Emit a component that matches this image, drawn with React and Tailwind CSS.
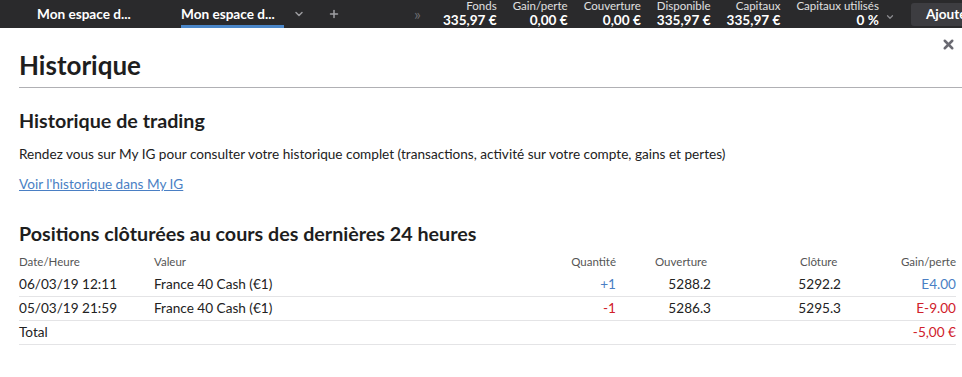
import React from "react";
import { FiChevronDown, FiPlus, FiX } from "react-icons/fi";

const stats = [
  { label: "Fonds", value: "335,97 €" },
  { label: "Gain/perte", value: "0,00 €" },
  { label: "Couverture", value: "0,00 €" },
  { label: "Disponible", value: "335,97 €" },
  { label: "Capitaux", value: "335,97 €" },
  { label: "Capitaux utilisés", value: "0 %" },
];

const positions = [
  {
    date: "06/03/19 12:11",
    market: "France 40 Cash (€1)",
    qty: "+1",
    open: "5288.2",
    close: "5292.2",
    pnl: "E4.00",
    positive: true,
  },
  {
    date: "05/03/19 21:59",
    market: "France 40 Cash (€1)",
    qty: "-1",
    open: "5286.3",
    close: "5295.3",
    pnl: "E-9.00",
    positive: false,
  },
];

const App = () => {
  return (
    <div className="h-[377px] w-[962px] overflow-hidden bg-white font-['Lato',sans-serif] text-[#222]">
      {/* top bar */}
      <div className="flex h-[28px] items-center overflow-hidden bg-[#2a2a2c] text-white">
        <div className="ml-[37px] w-[96px] shrink-0 text-[13.6px] font-bold whitespace-nowrap">Mon espace d...</div>
        <div className="relative ml-[48px] flex h-full w-[103px] shrink-0 items-center">
          <span className="text-[13.6px] font-bold whitespace-nowrap">Mon espace d...</span>
          <div className="absolute bottom-0 left-0 h-[3px] w-[103px] bg-[#4a86c8]" />
        </div>
        <FiChevronDown className="ml-[9px] h-[12px] w-[12px] shrink-0 stroke-[3] text-[#9a9a9e]" />
        <FiPlus className="ml-[23px] h-[12px] w-[12px] shrink-0 stroke-[3] text-[#a0a0a4]" />
        <span className="ml-[74px] shrink-0 text-[16px] leading-none text-[#6c6c70]">»</span>
        <div className="ml-[22px] flex shrink-0 gap-[16px]">
          {stats.map((s) => (
            <div key={s.label} className="flex shrink-0 flex-col items-end leading-none whitespace-nowrap">
              <span className="text-[11.5px] text-[#e0e0e0]">{s.label}</span>
              <span className="mt-[2px] text-[13.6px] font-bold">{s.value}</span>
            </div>
          ))}
        </div>
        <FiChevronDown className="ml-[6px] mt-[6px] h-[10px] w-[10px] shrink-0 stroke-[3] text-[#8a8a8e]" />
        <div className="ml-[16px] flex h-[23px] shrink-0 items-center rounded-l-[3px] bg-[#3d3d41] pl-[15px] pr-[10px] text-[13.6px] font-bold whitespace-nowrap">
          Ajouter
        </div>
      </div>

      {/* content */}
      <div className="relative pl-[19px]">
        <FiX className="absolute right-[6px] top-[9px] h-[15px] w-[15px] stroke-[4] text-[#6a6a72]" />
        <h1 className="pt-[21px] text-[26px] leading-[32px] font-bold text-[#1e1e1e]">Historique</h1>
        <div className="mt-[6px] h-px bg-[#b0b0b4]" />

        <div className="pr-[6px]">
          <h2 className="mt-[21px] text-[19.7px] leading-[24px] font-bold text-[#1e1e1e]">Historique de trading</h2>
          <p className="mt-[12px] text-[13.6px] leading-[18px]">
            Rendez vous sur My IG pour consulter votre historique complet (transactions, activité sur votre compte, gains et pertes)
          </p>
          <a href="#" className="mt-[12px] inline-block text-[13.6px] leading-[18px] text-[#4a7fc4] underline">
            Voir l'historique dans My IG
          </a>

          <h2 className="mt-[27px] text-[19.7px] leading-[24px] font-bold text-[#1e1e1e]">
            Positions clôturées au cours des dernières 24 heures
          </h2>

          <table className="mt-[6px] w-[937px] text-[13.6px]">
            <thead>
              <tr className="h-[20px] text-[11.5px] text-[#555]">
                <th className="w-[135px] text-left font-normal">Date/Heure</th>
                <th className="text-left font-normal">Valeur</th>
                <th className="w-[80px] text-right font-normal">Quantité</th>
                <th className="w-[95px] pl-[39px] text-left font-normal">Ouverture</th>
                <th className="w-[130px] pl-[89px] text-left font-normal">Clôture</th>
                <th className="w-[115px] text-right font-normal">Gain/perte</th>
              </tr>
            </thead>
            <tbody>
              {positions.map((p) => (
                <tr key={p.date} className="h-[24px] border-b border-[#e4e4e6]">
                  <td>{p.date}</td>
                  <td>{p.market}</td>
                  <td className={`text-right ${p.positive ? "text-[#4a7fc4]" : "text-[#d0202a]"}`}>{p.qty}</td>
                  <td className="text-right">{p.open}</td>
                  <td className="text-right">{p.close}</td>
                  <td className={`text-right ${p.positive ? "text-[#4a7fc4]" : "text-[#d0202a]"}`}>{p.pnl}</td>
                </tr>
              ))}
              <tr className="h-[24px] border-b border-[#e4e4e6]">
                <td>Total</td>
                <td />
                <td />
                <td />
                <td />
                <td className="text-right text-[#d0202a]">-5,00 €</td>
              </tr>
            </tbody>
          </table>
        </div>
      </div>
    </div>
  );
};

export default App;
